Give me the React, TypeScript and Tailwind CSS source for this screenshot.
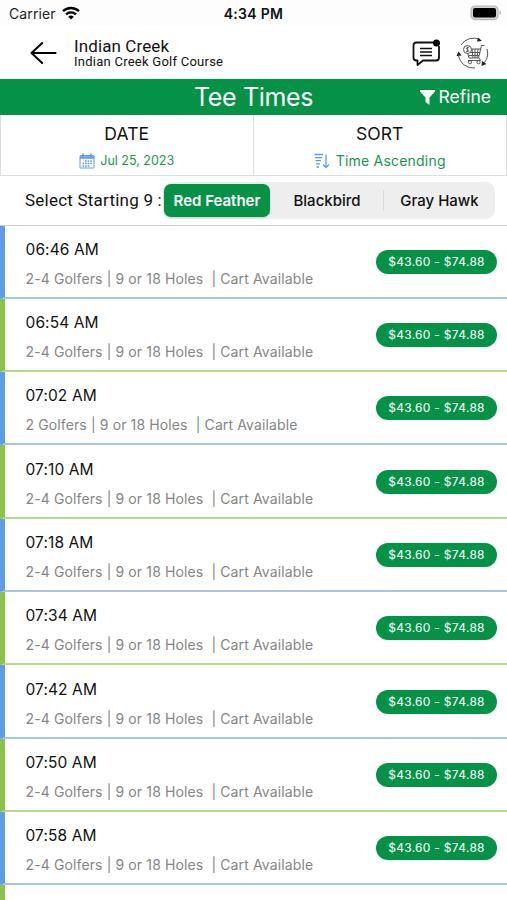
import React, { useState } from 'react';

const ROBOTO = "font-['Roboto','Liberation_Sans',sans-serif]";

const courses = ['Red Feather', 'Blackbird', 'Gray Hawk'];

const teeTimes = [
  { time: '06:46 AM', golfers: '2-4 Golfers' },
  { time: '06:54 AM', golfers: '2-4 Golfers' },
  { time: '07:02 AM', golfers: '2 Golfers' },
  { time: '07:10 AM', golfers: '2-4 Golfers' },
  { time: '07:18 AM', golfers: '2-4 Golfers' },
  { time: '07:34 AM', golfers: '2-4 Golfers' },
  { time: '07:42 AM', golfers: '2-4 Golfers' },
  { time: '07:50 AM', golfers: '2-4 Golfers' },
  { time: '07:58 AM', golfers: '2-4 Golfers' },
];

function WifiIcon() {
  return (
    <svg width="18" height="14" viewBox="0 0 18 14" fill="none" stroke="#000" strokeWidth="2.3">
      <path d="M1 5.2a11.6 11.6 0 0 1 16 0" />
      <path d="M4 8.4a7.3 7.3 0 0 1 10 0" />
      <path d="M9 13.6 6.2 10.8a4 4 0 0 1 5.6 0z" fill="#000" stroke="none" />
    </svg>
  );
}

function BatteryIcon() {
  return (
    <svg width="32" height="16" viewBox="0 0 32 16" fill="none">
      <rect x="1" y="1" width="27" height="13.6" rx="4" fill="#d4d4d4" stroke="#b5b5b5" strokeWidth="1.2" />
      <rect x="3" y="3" width="23" height="9.6" rx="2" fill="#000" />
      <path d="M29.6 5.6c1.6.6 1.6 3.8 0 4.4z" fill="#a5a5a5" />
    </svg>
  );
}

function BackIcon() {
  return (
    <svg width="27" height="24" viewBox="0 0 27 24" fill="none" stroke="#000" strokeWidth="2" strokeLinecap="round" strokeLinejoin="round">
      <path d="M12.2 2 1.5 12l10.7 10M1.5 12h24.1" />
    </svg>
  );
}

function MessageIcon() {
  return (
    <svg width="30" height="28" viewBox="0 0 30 28" fill="none" stroke="#111" strokeWidth="1.8" strokeLinejoin="round">
      <path d="M23 3.5H5.500Q2.500 3.500 2.500 6.500v12q0 3 3 3h1v4.500l5.500-4.500h13q3 0 3-3V7" />
      <path d="M9 9.500h12M9 13h12M9 16.500h12" strokeWidth="1.5" />
      <circle cx="25.5" cy="4" r="3.5" fill="#000" stroke="none" />
    </svg>
  );
}

function CartIcon() {
  return (
    <svg width="34" height="34" viewBox="0 0 34 34" fill="none" stroke="#555" strokeWidth="1">
      <path d="M5 9A15 15 0 0 1 24 3.5M31 13a15 15 0 0 1-4 15M19 32A15 15 0 0 1 2.5 19" />
      <path d="m22 1.5 4 3.5-5 .5zM26 25l-.5 5 5-2zM.5 20l2-4.5 3 4z" fill="#222" stroke="none" />
      <path d="M28.5 9.5h-3l-3 12.5H13l-2.5-9H25M14 16.5h10M13 19.5h10M16 13l1 9M19 13v9M22 13l-1 9M23 22l1.5 2.5H12" />
      <circle cx="14" cy="26.3" r="1.6" />
      <circle cx="22.5" cy="26.3" r="1.6" />
      <circle cx="11.5" cy="13.5" r="4" fill="#fff" />
      <path d="M13 11.8c-2.5-1-3.5 1-1.5 1.7s1.5 2.7-1.5 1.7M11.5 10.8v5.4" strokeWidth=".9" />
    </svg>
  );
}

function CalendarIcon() {
  return (
    <svg width="16" height="16" viewBox="0 0 16 16" fill="none" stroke="#5b9bea">
      <rect x="1" y="2.5" width="14" height="12.5" rx=".5" />
      <path d="M1 4.5h14" strokeWidth="2.5" />
      <path d="M4 .5v3.5M12 .5v3.5" strokeWidth="1.5" />
      <path d="M6 8h7M3.5 10.5h9.5M3.5 13h7" strokeWidth="1.6" strokeDasharray="1.6 1" />
    </svg>
  );
}

function SortIcon() {
  return (
    <svg width="16" height="16" viewBox="0 0 16 16" fill="none" stroke="#5b9bea" strokeWidth="1.3">
      <path d="M.5 1.5H9M1 4.6h7M1.5 7.7H7M2 10.800h4M2.5 14H5M12 1.500v13M9 11.500l3 3 3-3" />
    </svg>
  );
}

export default function App() {
  const [course, setCourse] = useState('Red Feather');

  return (
    <div className="h-[900px] w-[507px] overflow-hidden bg-white font-['Inter','Liberation_Sans',sans-serif] text-[#111]">
      {/* STATUS BAR */}
      <div className="grid h-[26px] grid-cols-3 items-center bg-[#fdfdfd]">
        <div className="flex items-center gap-[6px] pl-[9px] text-[14px] text-[#222]">
          <span className="tracking-[0.1px]">Carrier</span>
          <WifiIcon />
        </div>
        <span className="text-center text-[14px] font-semibold tracking-[0.3px]">4:34 PM</span>
        <div className="flex justify-end pr-[5px]">
          <BatteryIcon />
        </div>
      </div>

      {/* HEADER */}
      <div className="flex h-[53px] items-center pl-[30px] pr-[17px]">
        <button><BackIcon /></button>
        <div className={`ml-[17px] mt-px flex flex-col ${ROBOTO}`}>
          <span className="text-[17px] leading-[18px] tracking-[0.1px]">Indian Creek</span>
          <span className="text-[13px] leading-[14px] tracking-[0.25px]">Indian Creek Golf Course</span>
        </div>
        <div className="ml-auto flex items-center gap-[15px]">
          <MessageIcon />
          <CartIcon />
        </div>
      </div>

      {/* TITLE */}
      <div className="grid h-9 grid-cols-[1fr_auto_1fr] items-center bg-[#059247] text-white">
        <span />
        <h1 className="text-[25px] leading-[36px] tracking-[-0.35px]">Tee Times</h1>
        <button className="flex items-center justify-end gap-1 pr-4 pt-px text-[17.5px]">
          <svg width="15" height="15" viewBox="0 0 15 15" fill="#fff">
            <path d="M0 0h15v1.5l-5.500 6V15l-4-3V7.500L0 1.500z" />
          </svg>
          Refine
        </button>
      </div>

      {/* DATE / SORT */}
      <div className="grid h-[61px] grid-cols-2 border-b border-[#dedede]">
        <div className="flex flex-col items-center border-x border-[#dedede] pt-[7px]">
          <span className="text-[17.5px] leading-[24px] tracking-[0.1px]">DATE</span>
          <div className="mt-[6px] flex items-center gap-[5px] text-[12.5px] leading-[18px] text-[#16984f]">
            <CalendarIcon />
            <span>Jul 25, 2023</span>
          </div>
        </div>
        <div className="flex flex-col items-center border-r border-[#dedede] pt-[7px]">
          <span className="text-[17.5px] leading-[24px] tracking-[0.1px]">SORT</span>
          <div className="mt-[6px] flex items-center gap-[6px] text-[14px] leading-[18px] tracking-[0.2px] text-[#16984f]">
            <SortIcon />
            <span>Time Ascending</span>
          </div>
        </div>
      </div>

      {/* COURSE PICKER */}
      <div className="flex h-[49.6px] items-center border-b border-[#cfcfcf] pl-[25px]">
        <span className={`w-[138px] whitespace-nowrap pt-px text-[17px] tracking-[0.22px] ${ROBOTO}`}>
          Select Starting 9 :
        </span>
        <div className="flex h-[37px] w-[332px] items-center rounded-[9px] bg-[#eeeeef] pl-[1px] text-[15px] font-medium">
          {courses.map((name, i) => (
            <button
              key={name}
              onClick={() => setCourse(name)}
              className={
                course === name
                  ? 'h-[33px] w-[106px] whitespace-nowrap rounded-[7px] bg-[#059247] pt-px font-semibold text-white shadow-sm'
                  : `h-[21px] whitespace-nowrap leading-[21px] ${i === 2 ? 'w-[111px] border-l border-[#d8d8d8] pl-px' : 'w-[113px] pl-px'}`
              }
            >
              {name}
            </button>
          ))}
        </div>
      </div>

      {/* TEE TIMES */}
      {teeTimes.map((tee, i) => (
        <div
          key={tee.time}
          className={`flex h-[73.3px] items-center border-b-2 border-l-[5px] pl-[20.5px] pr-[10px] ${
            i % 2 === 0 ? 'border-b-[#a3c5ef] border-l-[#5f9be6]' : 'border-b-[#b4d98c] border-l-[#8bc34a]'
          }`}
        >
          <div className="flex flex-col pt-[5px]">
            <span className="text-[15.5px] leading-[22px] tracking-[0.1px]">{tee.time}</span>
            <span className="mt-[8px] whitespace-pre text-[14px] leading-[20px] tracking-[0.12px] text-[#858585]">
              {`${tee.golfers} | 9 or 18 Holes  | Cart Available`}
            </span>
          </div>
          <span className="ml-auto mt-px flex h-6 w-[121px] items-center justify-center rounded-full bg-[#059247] text-[12px] tracking-[0.3px] text-white">
            $43.60 - $74.88
          </span>
        </div>
      ))}
      <div className="h-5 border-l-[5px] border-[#8bc34a]" />
    </div>
  );
}
